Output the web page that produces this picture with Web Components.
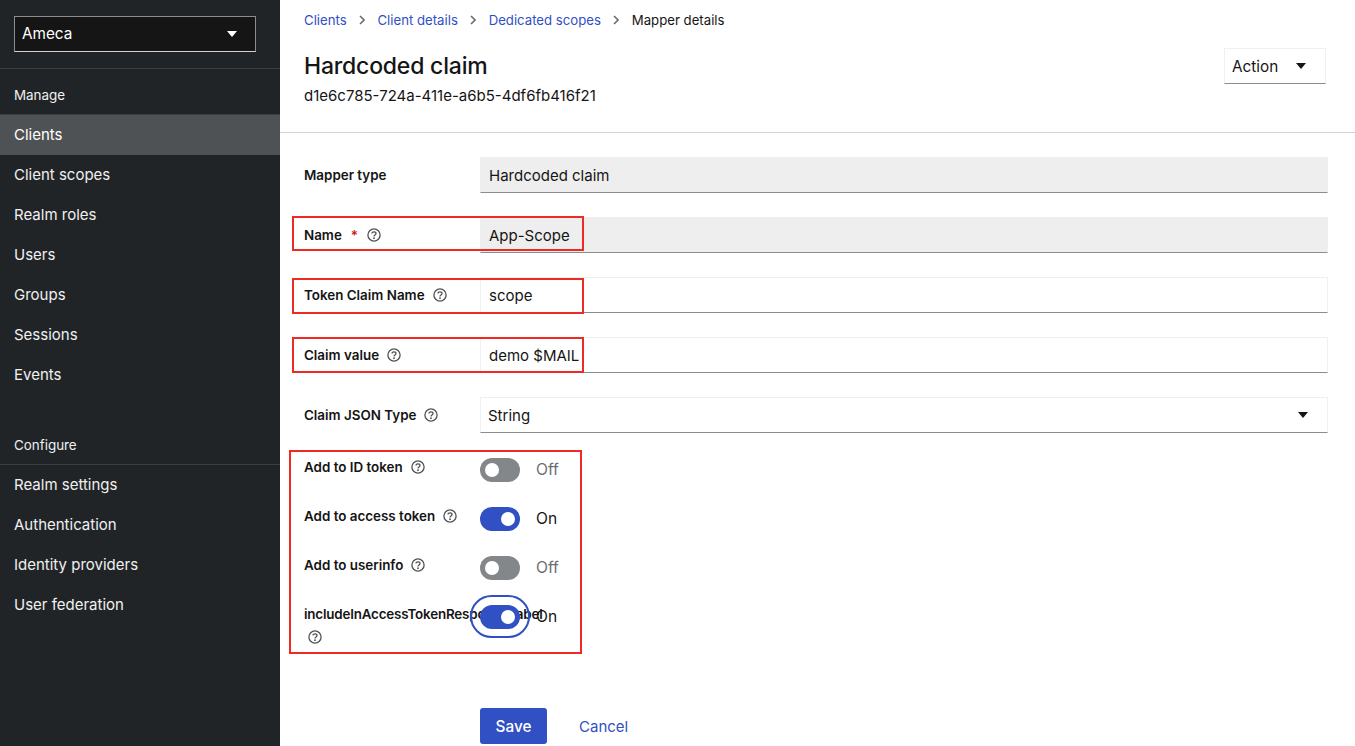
<!DOCTYPE html>
<html lang="en">
<head>
<meta charset="utf-8">
<title>Hardcoded claim</title>
<style>
html,body{margin:0;padding:0;height:100%;overflow:hidden;background:#fff;}
body{font-family:Inter,"Liberation Sans",sans-serif;font-size:15px;color:#151515;}
#app{display:flex;height:746px;}
</style>
</head>
<body>
<div id="app">
  <app-sidebar>
    <realm-select slot="top">Ameca</realm-select>
    <nav-group title="Manage">
      <nav-item active>Clients</nav-item>
      <nav-item>Client scopes</nav-item>
      <nav-item>Realm roles</nav-item>
      <nav-item>Users</nav-item>
      <nav-item>Groups</nav-item>
      <nav-item>Sessions</nav-item>
      <nav-item>Events</nav-item>
    </nav-group>
    <nav-group title="Configure" style="margin-top:40px">
      <nav-item>Realm settings</nav-item>
      <nav-item>Authentication</nav-item>
      <nav-item>Identity providers</nav-item>
      <nav-item>User federation</nav-item>
    </nav-group>
  </app-sidebar>
  <main-page>
    <bread-crumbs items="Clients|Client details|Dedicated scopes|Mapper details"></bread-crumbs>
    <page-head name="Hardcoded claim" sub="d1e6c785-724a-411e-a6b5-4df6fb416f21"></page-head>
    <mapper-form></mapper-form>
  </main-page>
</div>
<script>
const CARET = '<svg width="10" height="6" viewBox="0 0 10 6"><path d="M0 0h10L5 6z" fill="currentColor"/></svg>';
const HELP = `<svg width="14" height="14" viewBox="0 0 14 14" fill="none" stroke="#4f5255">
  <circle cx="7" cy="7" r="6.1" stroke-width="1.3"/>
  <path d="M5 5.6c0-1.1.9-1.8 2-1.8s2 .7 2 1.7c0 1.5-2 1.4-2 2.9" stroke-width="1.3"/>
  <circle cx="7" cy="10.2" r=".9" fill="#4f5255" stroke="none"/></svg>`;

class AppSidebar extends HTMLElement {
    constructor(){
        super();
        this.attachShadow({mode:'open'});
        this.shadowRoot.innerHTML = `
        <style>
            :host{display:block;width:280px;flex:none;height:100%;background:#212427;color:#fff;}
            .top{padding:16px 24px 16px 14px;border-bottom:1px solid #3c3f42;height:36px;}
            .rest{padding-top:16px;}
        </style>
        <div class="top"><slot name="top"></slot></div>
        <div class="rest"><slot></slot></div>`;
    }
}
customElements.define('app-sidebar', AppSidebar);

class RealmSelect extends HTMLElement {
    constructor(){
        super();
        this.attachShadow({mode:'open'});
        this.shadowRoot.innerHTML = `
        <style>
            :host{display:flex;align-items:center;justify-content:space-between;box-sizing:border-box;width:242px;height:36px;
                padding:0 18px 1px 7px;background:#151515;border:1px solid #8a8d90;border-bottom-color:#d2d2d2;color:#fff;font-size:15.3px;}
            svg{display:block;}
        </style>
        <slot></slot>${CARET}`;
    }
}
customElements.define('realm-select', RealmSelect);

class NavGroup extends HTMLElement {
    constructor(){
        super();
        this.attachShadow({mode:'open'});
        this.shadowRoot.innerHTML = `
        <style>
            :host{display:block;}
            .t{height:30px;line-height:20px;padding-left:14px;font-size:13.4px;color:#f0f0f0;box-sizing:border-box;border-bottom:1px solid #3c3f42;}
        </style>
        <div class="t">${this.getAttribute('title')}</div>
        <slot></slot>`;
    }
}
customElements.define('nav-group', NavGroup);

class NavItem extends HTMLElement {
    constructor(){
        super();
        this.attachShadow({mode:'open'});
        this.shadowRoot.innerHTML = `
        <style>
            :host{display:block;height:40px;line-height:39px;padding-left:14px;font-size:15px;color:#f0f0f0;}
            :host([active]){background:#4f5255;color:#fff;}
        </style>
        <slot></slot>`;
    }
}
customElements.define('nav-item', NavItem);

class MainPage extends HTMLElement {
    constructor(){
        super();
        this.attachShadow({mode:'open'});
        this.shadowRoot.innerHTML = `
        <style>:host{display:block;flex:1;min-width:0;background:#fff;}</style>
        <slot></slot>`;
    }
}
customElements.define('main-page', MainPage);

class BreadCrumbs extends HTMLElement {
    constructor(){
        super();
        this.attachShadow({mode:'open'});
        const items = this.getAttribute('items').split('|');
        const html = items.map((t,i)=> i < items.length-1
            ? `<a>${t}</a><svg width="6" height="10" viewBox="0 0 6 10"><path d="M1 1l4 4-4 4" fill="none" stroke="#6a6e73" stroke-width="1.6"/></svg>`
            : `<span>${t}</span>`).join('');
        this.shadowRoot.innerHTML = `
        <style>
            :host{display:flex;align-items:center;gap:12.4px;height:40px;padding-left:24px;font-size:13.2px;}
            a{color:#3050c3;}
            span{color:#151515;}
        </style>${html}`;
    }
}
customElements.define('bread-crumbs', BreadCrumbs);

class PageHead extends HTMLElement {
    constructor(){
        super();
        this.attachShadow({mode:'open'});
        this.shadowRoot.innerHTML = `
        <style>
            :host{display:flex;justify-content:space-between;align-items:flex-start;box-sizing:border-box;height:93px;
                padding:8px 29px 0 24px;border-bottom:1px solid #d2d2d2;}
            h1{margin:0;font-size:23px;font-weight:500;line-height:36px;letter-spacing:-.2px;color:#151515;}
            p{margin:0;font-size:15px;line-height:24px;color:#151515;}
            .action{display:flex;align-items:center;justify-content:space-between;box-sizing:border-box;width:102px;height:36px;
                padding:0 19px 0 7px;border:1px solid #f0f0f0;border-bottom-color:#8a8d90;font-size:15.3px;color:#151515;}
            svg{display:block;}
        </style>
        <div><h1>${this.getAttribute('name')}</h1><p>${this.getAttribute('sub')}</p></div>
        <div class="action">Action${CARET}</div>`;
    }
}
customElements.define('page-head', PageHead);

class TextRow extends HTMLElement {
    constructor(){
        super();
        this.attachShadow({mode:'open'});
        const a = n => this.getAttribute(n);
        const req = this.hasAttribute('required') ? '<i>*</i>' : '';
        const help = this.hasAttribute('nohelp') ? '' : HELP;
        const val = a('value');
        const right = this.hasAttribute('select') ? CARET : '';
        this.shadowRoot.innerHTML = `
        <style>
            :host{display:grid;grid-template-columns:176px 848px;height:36px;margin-bottom:24px;}
            .l{display:flex;align-items:center;gap:8px;font-size:13.4px;font-weight:600;color:#151515;}
            i{color:#c9190b;font-style:normal;margin-left:1px;margin-right:1px;}
            svg{display:block;flex:none;}
            .f{display:flex;align-items:center;justify-content:space-between;box-sizing:border-box;height:36px;padding:0 19px 0 8px;
                border:1px solid #f0f0f0;border-bottom-color:#8a8d90;font-size:15px;color:#151515;}
            :host([readonly]) .f{background:#eeeeee;border-color:#eeeeee;border-bottom-color:#8a8d90;}
            :host([select]) .f{padding-left:7px;}
        </style>
        <div class="l">${a('label')}${req}${help}</div>
        <div class="f"><span>${val}</span>${right}</div>`;
    }
}
customElements.define('text-row', TextRow);

class SwitchRow extends HTMLElement {
    constructor(){
        super();
        this.attachShadow({mode:'open'});
        const on = this.hasAttribute('on');
        this.shadowRoot.innerHTML = `
        <style>
            :host{display:grid;grid-template-columns:176px auto;height:49px;}
            .l{font-size:13.4px;font-weight:600;line-height:21px;color:#151515;white-space:nowrap;display:flex;align-items:flex-start;gap:8px;height:24px;margin-top:-1px;}
            .l svg{margin-top:3px;display:block;}
            .s{display:flex;align-items:flex-start;gap:16px;font-size:15.6px;line-height:24px;}
            .track{position:relative;width:40px;height:24px;border-radius:12px;background:${on?'#3050c3':'#84878a'};flex:none;}
            .track::after{content:"";position:absolute;top:5px;width:14px;height:14px;border-radius:50%;background:#fff;left:${on?'21px':'5px'};}
            .v{color:${on?'#151515':'#6a6e73'};}
        </style>
        <div class="l">${this.getAttribute('label')}${HELP}</div>
        <div class="s"><div class="track"></div><div class="v">${on?'On':'Off'}</div></div>`;
    }
}
customElements.define('switch-row', SwitchRow);

// last switch: long label that runs under the toggle, help icon wraps below
class LongSwitchRow extends HTMLElement {
    constructor(){
        super();
        this.attachShadow({mode:'open'});
        this.shadowRoot.innerHTML = `
        <style>
            :host{display:grid;grid-template-columns:176px auto;height:49px;}
            .l{font-size:13.4px;font-weight:600;line-height:21px;color:#151515;margin-top:-1px;}
            .name{white-space:nowrap;display:block;height:24px;letter-spacing:-.18px;}
            .l svg{display:block;margin:2px 0 0 4px;}
            .s{position:relative;display:flex;align-items:flex-start;gap:16px;font-size:15.6px;line-height:24px;}
            .track{position:relative;width:40px;height:24px;border-radius:12px;background:#3050c3;flex:none;}
            .track::after{content:"";position:absolute;top:5px;width:14px;height:14px;border-radius:50%;background:#fff;left:21px;}
            .focus{position:absolute;left:-10px;top:-10px;box-sizing:border-box;width:60px;height:43px;border:2px solid #3050c3;border-radius:22px;}
        </style>
        <div class="l"><span class="name">${this.getAttribute('label')}</span>${HELP}</div>
        <div class="s"><div class="focus"></div><div class="track"></div><div>On</div></div>`;
    }
}
customElements.define('long-switch-row', LongSwitchRow);

class MapperForm extends HTMLElement {
    constructor(){
        super();
        this.attachShadow({mode:'open'});
        this.shadowRoot.innerHTML = `
        <style>
            :host{display:block;position:relative;padding:24px 0 0 24px;}
            .switches{padding-top:1px;}
            .actions{display:flex;align-items:center;gap:32px;margin:54px 0 0 176px;}
            .save{display:flex;align-items:center;justify-content:center;width:67px;height:36px;border-radius:3px;background:#3050c3;color:#fff;font-size:15.3px;font-weight:500;}
            .cancel{color:#3050c3;font-size:15px;}
            .red{position:absolute;box-sizing:border-box;border:2px solid #ee2a24;pointer-events:none;}
        </style>
        <text-row label="Mapper type" nohelp readonly value="Hardcoded claim"></text-row>
        <text-row label="Name" required readonly value="App-Scope"></text-row>
        <text-row label="Token Claim Name" value="scope"></text-row>
        <text-row label="Claim value" value="demo $MAIL"></text-row>
        <text-row label="Claim JSON Type" select value="String"></text-row>
        <div class="switches">
            <switch-row label="Add to ID token"></switch-row>
            <switch-row label="Add to access token" on></switch-row>
            <switch-row label="Add to userinfo"></switch-row>
            <long-switch-row label="includeInAccessTokenResponse.label"></long-switch-row>
        </div>
        <div class="actions"><div class="save">Save</div><div class="cancel">Cancel</div></div>
        <div class="red" style="left:12px;top:83px;width:292px;height:35px"></div>
        <div class="red" style="left:12px;top:145px;width:292px;height:36px"></div>
        <div class="red" style="left:12px;top:204px;width:292px;height:36px"></div>
        <div class="red" style="left:9px;top:317px;width:293px;height:204px"></div>`;
    }
}
customElements.define('mapper-form', MapperForm);
</script>
</body>
</html>
